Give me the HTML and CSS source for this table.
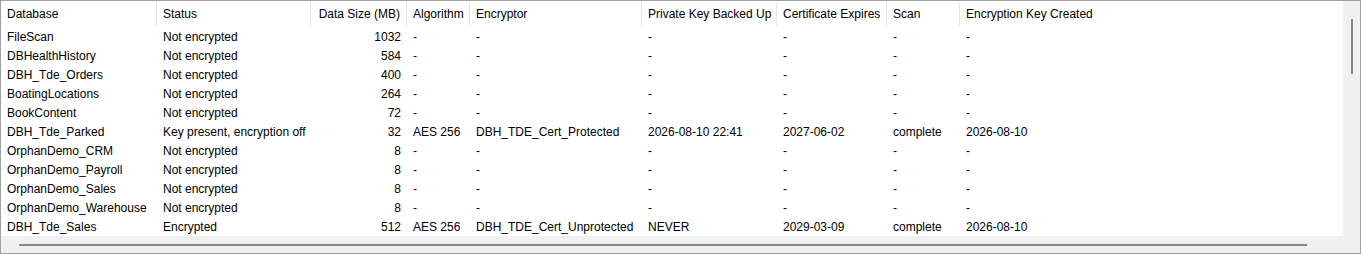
FILE: index.html
```html
<!DOCTYPE html>
<html lang="en">
<head>
    <meta charset="UTF-8">
    <title>TDE Status</title>
    <link rel="stylesheet" href="styles.css">
</head>
<body>

    <div class="listview">
        <div class="listview__body">
            <div class="lv-row lv-header">
                <div class="lv-cell">Database</div>
                <div class="lv-cell">Status</div>
                <div class="lv-cell num">Data Size (MB)</div>
                <div class="lv-cell">Algorithm</div>
                <div class="lv-cell">Encryptor</div>
                <div class="lv-cell">Private Key Backed Up</div>
                <div class="lv-cell">Certificate Expires</div>
                <div class="lv-cell">Scan</div>
                <div class="lv-cell">Encryption Key Created</div>
            </div>

            <div class="lv-row">
                <div class="lv-cell">FileScan</div>
                <div class="lv-cell">Not encrypted</div>
                <div class="lv-cell num">1032</div>
                <div class="lv-cell">-</div>
                <div class="lv-cell">-</div>
                <div class="lv-cell">-</div>
                <div class="lv-cell">-</div>
                <div class="lv-cell">-</div>
                <div class="lv-cell">-</div>
            </div>
            <div class="lv-row">
                <div class="lv-cell">DBHealthHistory</div>
                <div class="lv-cell">Not encrypted</div>
                <div class="lv-cell num">584</div>
                <div class="lv-cell">-</div>
                <div class="lv-cell">-</div>
                <div class="lv-cell">-</div>
                <div class="lv-cell">-</div>
                <div class="lv-cell">-</div>
                <div class="lv-cell">-</div>
            </div>
            <div class="lv-row">
                <div class="lv-cell">DBH_Tde_Orders</div>
                <div class="lv-cell">Not encrypted</div>
                <div class="lv-cell num">400</div>
                <div class="lv-cell">-</div>
                <div class="lv-cell">-</div>
                <div class="lv-cell">-</div>
                <div class="lv-cell">-</div>
                <div class="lv-cell">-</div>
                <div class="lv-cell">-</div>
            </div>
            <div class="lv-row">
                <div class="lv-cell">BoatingLocations</div>
                <div class="lv-cell">Not encrypted</div>
                <div class="lv-cell num">264</div>
                <div class="lv-cell">-</div>
                <div class="lv-cell">-</div>
                <div class="lv-cell">-</div>
                <div class="lv-cell">-</div>
                <div class="lv-cell">-</div>
                <div class="lv-cell">-</div>
            </div>
            <div class="lv-row">
                <div class="lv-cell">BookContent</div>
                <div class="lv-cell">Not encrypted</div>
                <div class="lv-cell num">72</div>
                <div class="lv-cell">-</div>
                <div class="lv-cell">-</div>
                <div class="lv-cell">-</div>
                <div class="lv-cell">-</div>
                <div class="lv-cell">-</div>
                <div class="lv-cell">-</div>
            </div>
            <div class="lv-row">
                <div class="lv-cell">DBH_Tde_Parked</div>
                <div class="lv-cell">Key present, encryption off</div>
                <div class="lv-cell num">32</div>
                <div class="lv-cell">AES 256</div>
                <div class="lv-cell">DBH_TDE_Cert_Protected</div>
                <div class="lv-cell">2026-08-10 22:41</div>
                <div class="lv-cell">2027-06-02</div>
                <div class="lv-cell">complete</div>
                <div class="lv-cell">2026-08-10</div>
            </div>
            <div class="lv-row">
                <div class="lv-cell">OrphanDemo_CRM</div>
                <div class="lv-cell">Not encrypted</div>
                <div class="lv-cell num">8</div>
                <div class="lv-cell">-</div>
                <div class="lv-cell">-</div>
                <div class="lv-cell">-</div>
                <div class="lv-cell">-</div>
                <div class="lv-cell">-</div>
                <div class="lv-cell">-</div>
            </div>
            <div class="lv-row">
                <div class="lv-cell">OrphanDemo_Payroll</div>
                <div class="lv-cell">Not encrypted</div>
                <div class="lv-cell num">8</div>
                <div class="lv-cell">-</div>
                <div class="lv-cell">-</div>
                <div class="lv-cell">-</div>
                <div class="lv-cell">-</div>
                <div class="lv-cell">-</div>
                <div class="lv-cell">-</div>
            </div>
            <div class="lv-row">
                <div class="lv-cell">OrphanDemo_Sales</div>
                <div class="lv-cell">Not encrypted</div>
                <div class="lv-cell num">8</div>
                <div class="lv-cell">-</div>
                <div class="lv-cell">-</div>
                <div class="lv-cell">-</div>
                <div class="lv-cell">-</div>
                <div class="lv-cell">-</div>
                <div class="lv-cell">-</div>
            </div>
            <div class="lv-row">
                <div class="lv-cell">OrphanDemo_Warehouse</div>
                <div class="lv-cell">Not encrypted</div>
                <div class="lv-cell num">8</div>
                <div class="lv-cell">-</div>
                <div class="lv-cell">-</div>
                <div class="lv-cell">-</div>
                <div class="lv-cell">-</div>
                <div class="lv-cell">-</div>
                <div class="lv-cell">-</div>
            </div>
            <div class="lv-row">
                <div class="lv-cell">DBH_Tde_Sales</div>
                <div class="lv-cell">Encrypted</div>
                <div class="lv-cell num">512</div>
                <div class="lv-cell">AES 256</div>
                <div class="lv-cell">DBH_TDE_Cert_Unprotected</div>
                <div class="lv-cell">NEVER</div>
                <div class="lv-cell">2029-03-09</div>
                <div class="lv-cell">complete</div>
                <div class="lv-cell">2026-08-10</div>
            </div>
        </div>

        <div class="scrollbar scrollbar--v"><span class="scrollbar__thumb"></span></div>
        <div class="scrollbar scrollbar--h"><span class="scrollbar__thumb"></span></div>
        <div class="scrollbar-corner"></div>
    </div>

</body>
</html>
```

FILE: styles.css
```css
*,
*::before,
*::after {
    box-sizing: border-box;
}

body {
    margin: 0;
    font-family: "Liberation Sans", Arial, sans-serif;
    font-size: 12px;
    color: #000;
    background: #fff;
}

.listview {
    width: 1361px;
    height: 254px;
    border: 1px solid #a0a0a0;
    display: grid;
    grid-template-columns: 1342px 17px;
    grid-template-rows: 235px 17px;
    overflow: hidden;
}

.listview__body {
    background: #fff;
    overflow: hidden;
}

.lv-row {
    display: grid;
    grid-template-columns: 156px 154px 96px 63px 172px 135px 110px 73px 1fr;
    height: 19px;
    align-items: center;
    white-space: nowrap;
}

.lv-cell {
    padding: 0 6px;
    overflow: hidden;
}

.lv-cell.num {
    text-align: right;
}

.lv-header {
    height: 26px;
    padding-top: 1px;
    align-items: start;
}

.lv-header .lv-cell {
    height: 24px;
    line-height: 25px;
    border-right: 1px solid #e5e5e5;
}

.lv-header .lv-cell:last-child {
    border-right: 0;
}

.scrollbar,
.scrollbar-corner {
    background: #f0f0f0;
    display: flex;
}

.scrollbar__thumb {
    background: #858585;
}

.scrollbar--v {
    grid-column: 2;
    grid-row: 1;
    justify-content: center;
    padding-top: 18px;
}

.scrollbar--v .scrollbar__thumb {
    width: 2px;
    height: 55px;
    margin-left: 1px;
}

.scrollbar--h {
    grid-column: 1;
    grid-row: 2;
    align-items: center;
    padding-left: 18px;
}

.scrollbar--h .scrollbar__thumb {
    width: 1288px;
    height: 2px;
}
```
